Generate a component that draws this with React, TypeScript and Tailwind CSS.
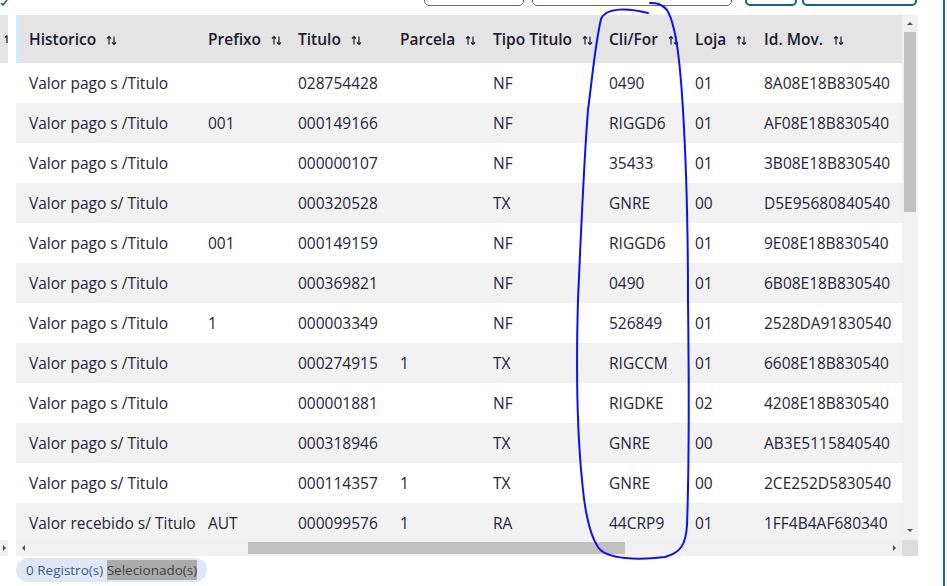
const columns = [
  { key: "hist", label: "Historico", w: "w-[179px]" },
  { key: "pref", label: "Prefixo", w: "w-[90px]" },
  { key: "tit", label: "Titulo", w: "w-[102px]" },
  { key: "parc", label: "Parcela", w: "w-[93px]" },
  { key: "tipo", label: "Tipo Titulo", w: "w-[116px]" },
  { key: "cli", label: "Cli/For", w: "w-[86px]" },
  { key: "loja", label: "Loja", w: "w-[69px]" },
  { key: "id", label: "Id. Mov.", w: "w-[151px]" },
];

const rows = [
  ["Valor pago s /Titulo", "", "028754428", "", "NF", "0490", "01", "8A08E18B830540"],
  ["Valor pago s /Titulo", "001", "000149166", "", "NF", "RIGGD6", "01", "AF08E18B830540"],
  ["Valor pago s /Titulo", "", "000000107", "", "NF", "35433", "01", "3B08E18B830540"],
  ["Valor pago s/ Titulo", "", "000320528", "", "TX", "GNRE", "00", "D5E95680840540"],
  ["Valor pago s /Titulo", "001", "000149159", "", "NF", "RIGGD6", "01", "9E08E18B830540"],
  ["Valor pago s /Titulo", "", "000369821", "", "NF", "0490", "01", "6B08E18B830540"],
  ["Valor pago s /Titulo", "1", "000003349", "", "NF", "526849", "01", "2528DA91830540"],
  ["Valor pago s /Titulo", "", "000274915", "1", "TX", "RIGCCM", "01", "6608E18B830540"],
  ["Valor pago s /Titulo", "", "000001881", "", "NF", "RIGDKE", "02", "4208E18B830540"],
  ["Valor pago s/ Titulo", "", "000318946", "", "TX", "GNRE", "00", "AB3E5115840540"],
  ["Valor pago s/ Titulo", "", "000114357", "1", "TX", "GNRE", "00", "2CE252D5830540"],
  ["Valor recebido s/ Titulo", "AUT", "000099576", "1", "RA", "44CRP9", "01", "1FF4B4AF680340"],
];

function SortIcon() {
  return (
    <svg width="11" height="11" viewBox="0 0 11 11" className="ml-[10px] shrink-0">
      <path d="M3 9.5V1.5M1 3.5L3 1.5L5 3.5" fill="none" stroke="#1f1f2e" strokeWidth="1.2" />
      <path d="M8 1.5V9.5M6 7.5L8 9.5L10 7.5" fill="none" stroke="#1f1f2e" strokeWidth="1.2" />
    </svg>
  );
}

function Tri({ dir }: { dir: "up" | "down" | "left" | "right" }) {
  const d = {
    up: "M1 5L4 2L7 5Z",
    down: "M1 3L4 6L7 3Z",
    left: "M5 1L2 4L5 7Z",
    right: "M3 1L6 4L3 7Z",
  }[dir];
  return (
    <svg width="8" height="8" viewBox="0 0 8 8">
      <path d={d} fill="#505050" />
    </svg>
  );
}

export default function App() {
  return (
    <div
      className="relative flex w-[947px] h-[586px] overflow-hidden bg-white text-[15.5px]"
      style={{ fontFamily: '"Open Sans", "Noto Sans", sans-serif' }}
    >
      <div className="flex flex-col w-[943px]">
        {/* partially visible toolbar buttons */}
        <div className="flex h-[15px] items-start">
          <svg width="8" height="6" viewBox="0 0 8 6" className="shrink-0">
            <path d="M1 3L3 5L7 0" fill="none" stroke="#1d4f8f" strokeWidth="1.5" />
          </svg>
          <div className="ml-[416px] w-[100px] h-[30px] -mt-[24px] border border-[#6b6b6b] rounded-[5px]" />
          <div className="ml-[8px] w-[200px] h-[30px] -mt-[24px] border border-[#6b6b6b] rounded-[5px]" />
          <div className="ml-[13px] w-[52px] h-[30px] -mt-[24px] border-2 border-[#176088] rounded-[5px]" />
          <div className="ml-[5px] w-[115px] h-[30px] -mt-[24px] border-2 border-[#176088] rounded-[5px]" />
        </div>

        <div className="flex h-[541px]">
          {/* edge of the panel on the left */}
          <div className="flex flex-col w-[8px]">
            <div className="h-[48px] bg-[#e4e4e4] flex items-center justify-end">
              <svg width="4" height="10" viewBox="0 0 4 10">
                <path d="M3 9V1.5M1 3.5L3 1.5" fill="none" stroke="#1f1f2e" strokeWidth="1.2" />
              </svg>
            </div>
            <div className="flex-1" />
            <div className="h-[16px] bg-[#f1f1f1] flex items-center">
              <Tri dir="right" />
            </div>
          </div>

          <div className="ml-[8px] flex flex-col w-[902px]">
            <div className="flex h-[525px]">
              <div className="w-[886px] overflow-hidden">
                <div className="flex h-[48px] bg-[#e4e4e4] border-l-[5px] border-[#d5ebfa] w-max">
                  {columns.map((c, i) => (
                    <div
                      key={c.key}
                      className={`${i === 0 ? "w-[174px] pl-[8px]" : c.w + " pl-[13px]"} flex items-center pt-[2px] font-semibold text-[#1b1b2c] shrink-0`}
                    >
                      {c.label}
                      <SortIcon />
                    </div>
                  ))}
                </div>
                {rows.map((r, ri) => (
                  <div
                    key={ri}
                    className={`flex h-[40px] w-max ${ri % 2 === 1 ? "bg-[#f2f2f2]" : "bg-white"}`}
                  >
                    {r.map((cell, ci) => (
                      <div
                        key={ci}
                        className={`${columns[ci].w} shrink-0 pl-[13px] pt-[2px] flex items-center whitespace-nowrap text-[#24243a]`}
                      >
                        {cell}
                      </div>
                    ))}
                  </div>
                ))}
              </div>
              {/* vertical scrollbar */}
              <div className="w-[16px] bg-[#f1f1f1] flex flex-col items-center">
                <div className="h-[17px] flex items-center">
                  <Tri dir="up" />
                </div>
                <div className="w-[12px] h-[180px] bg-[#c1c1c1]" />
                <div className="flex-1" />
                <div className="h-[20px] flex items-center">
                  <Tri dir="down" />
                </div>
              </div>
            </div>
            {/* horizontal scrollbar */}
            <div className="flex h-[16px]">
              <div className="w-[886px] bg-[#f1f1f1] flex items-center">
                <div className="w-[16px] flex justify-center">
                  <Tri dir="left" />
                </div>
                <div className="ml-[216px] w-[377px] h-[12px] bg-[#c1c1c1]" />
                <div className="flex-1" />
                <div className="w-[16px] flex justify-center">
                  <Tri dir="right" />
                </div>
              </div>
              <div className="w-[16px] bg-[#dcdcdc]" />
            </div>
          </div>
        </div>

        <div className="pl-[16px] pt-[2px]">
          <div className="inline-flex items-center h-[24px] px-[10px] rounded-full bg-[#dfe7f7] text-[13.5px] text-[#3a5a8c]">
            0 Registro(s)&nbsp;<span className="bg-[#ababab] text-[#3d3d4d]">Selecionado(s)</span>
          </div>
        </div>
      </div>
      <div className="w-[2px] h-full bg-[#1d6b8a]" />

      {/* hand-drawn annotation */}
      <svg
        className="absolute left-0 top-0 pointer-events-none"
        width="947"
        height="586"
        viewBox="0 0 947 586"
      >
        <path
          d="M648 13 C628 8 606 7 601 19 C595 45 592 80 588 110 C584 160 581 230 578 300 C576 370 577 430 582 480 C585 515 590 535 598 547 C606 560 640 560 665 557 C680 553 686 545 687 525 C689 470 689 380 688 300 C688 230 686 160 683 110 C680 60 676 25 667 10 C662 4 657 3 650 3"
          fill="none"
          stroke="#1010ee"
          strokeWidth="2"
          strokeLinecap="round"
        />
      </svg>
    </div>
  );
}
